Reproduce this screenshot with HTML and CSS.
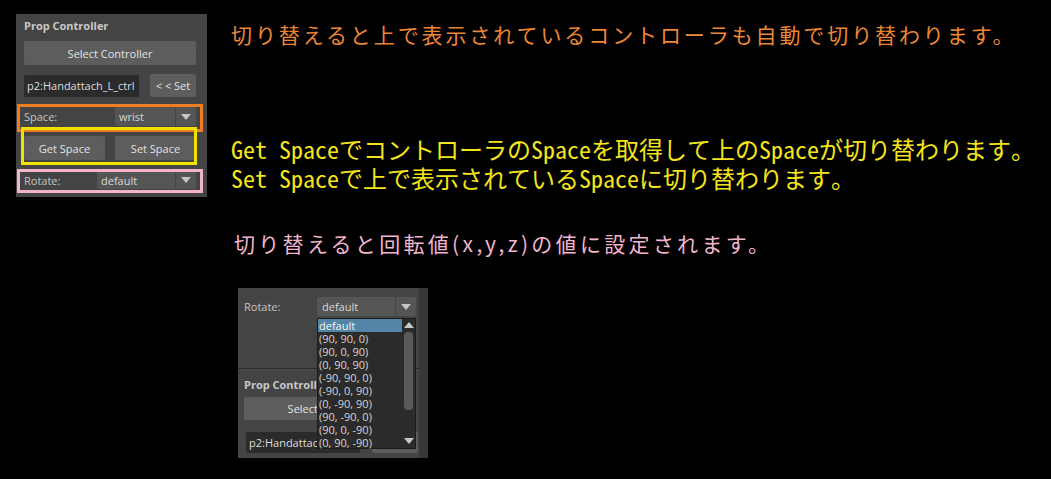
FILE: index.html
```html
<!DOCTYPE html>
<html lang="ja">
<head>
<meta charset="utf-8">
<title>Prop Controller</title>
<link rel="stylesheet" href="styles.css">
</head>
<body>
<div class="page">
  <div class="maya">
    <div class="title">Prop Controller</div>
    <div class="btn wide">Select Controller</div>
    <div class="row r2">
      <div class="field">p2:Handattach_L_ctrl</div>
      <div class="btn setbtn">&lt; &lt; Set</div>
    </div>
    <div class="row r3">
      <span class="lbl">Space:</span>
      <div class="combo combo-space"><span class="ctext">wrist</span><span class="carrow"><i class="tri"></i></span></div>
    </div>
    <div class="row r4">
      <div class="btn half">Get Space</div>
      <div class="btn half">Set Space</div>
    </div>
    <div class="row r5">
      <span class="lbl">Rotate:</span>
      <div class="combo combo-rot"><span class="ctext">default</span><span class="carrow"><i class="tri"></i></span></div>
    </div>
    <div class="hl hl-orange"></div>
    <div class="hl hl-yellow"></div>
    <div class="hl hl-pink"></div>
  </div>

  <div class="notes">
    <p class="note note-orange">切り替えると上で表示されているコントローラも自動で切り替わります。</p>
    <div class="note-yellow">
      <p>Get SpaceでコントローラのSpaceを取得して上のSpaceが切り替わります。</p>
      <p>Set Spaceで上で表示されているSpaceに切り替わります。</p>
    </div>
    <p class="note note-pink">切り替えると回転値(x,y,z)の値に設定されます。</p>

    <div class="shot">
      <div class="shot-inner">
        <div class="row s1">
          <span class="lbl">Rotate:</span>
          <div class="combo combo-rot2"><span class="ctext">default</span><span class="carrow"><i class="tri"></i></span></div>
        </div>
        <div class="sep"></div>
        <div class="title s-title">Prop Controller</div>
        <div class="btn s-wide">Select Controller</div>
        <div class="row s3">
          <div class="field s-field">p2:Handattach_L_ctrl</div>
          <div class="btn s-set">&lt; &lt; Set</div>
        </div>
        <div class="list">
          <div class="items">
            <div class="item sel">default</div>
            <div class="item">(90, 90, 0)</div>
            <div class="item">(90, 0, 90)</div>
            <div class="item">(0, 90, 90)</div>
            <div class="item">(-90, 90, 0)</div>
            <div class="item">(-90, 0, 90)</div>
            <div class="item">(0, -90, 90)</div>
            <div class="item">(90, -90, 0)</div>
            <div class="item">(90, 0, -90)</div>
            <div class="item">(0, 90, -90)</div>
          </div>
          <div class="sbar">
            <i class="tri-up"></i>
            <div class="thumb"></div>
            <i class="tri-down"></i>
          </div>
        </div>
      </div>
      <div class="shot-strip"></div>
    </div>
  </div>
</div>
</body>
</html>
```

FILE: styles.css
```css
html, body {
  margin: 0;
  padding: 0;
  background: #000;
}
body {
  width: 1051px;
  height: 479px;
  overflow: hidden;
}
p { margin: 0; }

.page {
  display: flex;
  align-items: flex-start;
  padding: 14px 0 0 16px;
}

/* ---------- Maya style panel ---------- */
.maya {
  position: relative;
  width: 191px;
  height: 183px;
  box-sizing: border-box;
  padding: 0 11px 0 8px;
  background: #444444;
  font-family: "Open Sans", "Noto Sans", sans-serif;
  font-size: 11px;
  color: #d6d6d6;
}
.title {
  padding-top: 5px;
  height: 14px;
  line-height: 14px;
  font-weight: bold;
  color: #c8c8c8;
}
.btn {
  display: flex;
  align-items: center;
  justify-content: center;
  background: #5d5d5d;
  color: #e2e2e2;
  border-radius: 2px;
  box-sizing: border-box;
}
.wide {
  margin-top: 8px;
  height: 24px;
  width: 172px;
}
.row {
  display: flex;
  align-items: center;
}
.r2 { margin-top: 9px; height: 23px; gap: 11px; }
.field {
  width: 115px;
  height: 22px;
  margin-top: 1px;
  box-sizing: border-box;
  padding-left: 3px;
  background: #2b2b2b;
  color: #dedede;
  line-height: 22px;
  border-radius: 2px;
  white-space: nowrap;
  overflow: hidden;
}
.setbtn { width: 46px; height: 23px; }
.r3 { margin-top: 10px; height: 19px; justify-content: space-between; }
.lbl { color: #c4c4c4; }
.combo {
  display: flex;
  background: #555555;
  border-radius: 2px;
  box-sizing: border-box;
}
.ctext {
  flex: 1;
  padding-left: 4px;
  color: #d8d8d8;
  display: flex;
  align-items: center;
}
.carrow {
  width: 20px;
  border-left: 1px solid #444;
  display: flex;
  align-items: center;
  justify-content: center;
}
.tri {
  width: 0;
  height: 0;
  border-left: 5px solid transparent;
  border-right: 5px solid transparent;
  border-top: 6px solid #c6c6c6;
}
.combo-space { width: 81px; height: 19px; }
.r4 { margin-top: 10px; height: 24px; gap: 10px; }
.half { width: 81px; height: 24px; }
.r5 { margin-top: 11px; height: 18px; justify-content: space-between; }
.combo-rot { width: 99px; height: 18px; }

.hl {
  position: absolute;
  box-sizing: border-box;
  border: 3px solid;
}
.hl-orange { left: 1px; top: 90px; width: 186px; height: 28px; border-color: #ef7d22; }
.hl-yellow { left: 5px; top: 113px; width: 176px; height: 38px; border-color: #f2e200; }
.hl-pink   { left: 1px; top: 155px; width: 186px; height: 24px; border-color: #f3b3cb; }

/* ---------- notes ---------- */
.notes {
  margin-left: 24px;
  display: flex;
  flex-direction: column;
  align-items: flex-start;
}
.note {
  font-family: "Noto Sans CJK JP", sans-serif;
  font-size: 21px;
  line-height: 30px;
  white-space: nowrap;
}
.note-orange {
  margin-top: 5px;
  letter-spacing: 2.9px;
  color: #ec8736;
}
.note-yellow {
  margin-top: 85px;
  font-family: "Noto Sans Mono CJK JP", "Noto Sans CJK JP", monospace;
  font-size: 24px;
  line-height: 29px;
  color: #f4e41c;
  white-space: nowrap;
}
.note-pink {
  margin-top: 36px;
  margin-left: 3px;
  letter-spacing: 3.3px;
  color: #f2b5cd;
}

/* ---------- screenshot of the open drop-down ---------- */
.shot {
  margin-top: 30px;
  margin-left: 7px;
  display: flex;
  height: 170px;
  font-family: "Open Sans", "Noto Sans", sans-serif;
  font-size: 11px;
  color: #d6d6d6;
}
.shot-inner {
  position: relative;
  width: 181px;
  background: #444444;
  overflow: hidden;
}
.shot-strip {
  width: 9px;
  background: #383838;
}
.s1 {
  margin-top: 9px;
  height: 19px;
  padding-left: 6px;
}
.s1 .lbl { width: 73px; }
.combo-rot2 { width: 99px; height: 19px; }
.combo-rot2 .ctext { padding-left: 5px; }
.sep {
  margin-top: 52px;
  height: 1px;
  background: #2a2a2a;
  border-bottom: 1px solid #4c4c4c;
}
.s-title {
  margin-top: 3px;
  padding-left: 6px;
}
.s-wide {
  margin: 5px 0 0 6px;
  width: 172px;
  height: 23px;
}
.s3 {
  margin-top: 12px;
  padding-left: 8px;
  gap: 12px;
  height: 21px;
}
.s-field { width: 114px; height: 21px; margin-top: 0; line-height: 21px; }
.s-set { width: 46px; height: 21px; }

.list {
  position: absolute;
  left: 79px;
  top: 30px;
  width: 99px;
  height: 131px;
  box-sizing: border-box;
  display: flex;
  background: #2b2b2b;
  border: 1px solid #1c1c1c;
}
.items {
  flex: 1;
}
.item {
  height: 13px;
  line-height: 13px;
  padding-left: 1px;
  color: #d4d4d4;
  white-space: nowrap;
}
.item.sel {
  background: #5285a6;
  color: #f4f4f4;
}
.sbar {
  width: 13px;
  display: flex;
  flex-direction: column;
  align-items: center;
  background: #2b2b2b;
}
.tri-up, .tri-down {
  width: 0;
  height: 0;
  border-left: 5px solid transparent;
  border-right: 5px solid transparent;
}
.tri-up {
  margin-top: 3px;
  border-bottom: 6px solid #c8c8c8;
}
.tri-down {
  margin-top: auto;
  margin-bottom: 4px;
  border-top: 6px solid #c8c8c8;
}
.thumb {
  margin-top: 4px;
  width: 9px;
  height: 78px;
  border-radius: 4px;
  background: #5a5a5a;
}
```
